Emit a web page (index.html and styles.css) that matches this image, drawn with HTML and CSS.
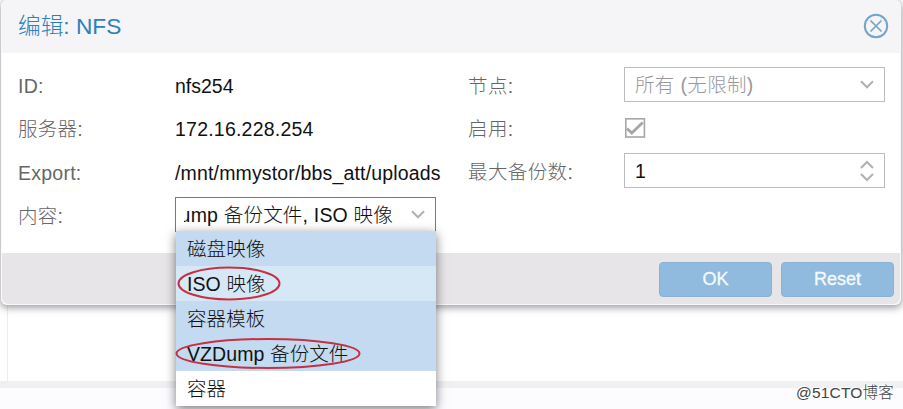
FILE: index.html
```
<!DOCTYPE html>
<html lang="zh-CN">
<head>
<meta charset="utf-8">
<title>编辑: NFS</title>
<link rel="stylesheet" href="styles.css">
</head>
<body>
<div class="page">
  <section class="dialog">
    <header class="titlebar">
      <h1>编辑: NFS</h1>
      <svg class="close" width="26" height="26" viewBox="0 0 26 26"><circle cx="13" cy="13" r="11.2"/><path d="M7.5 7.5l11 11M18.5 7.5l-11 11"/></svg>
    </header>
    <div class="form">
      <div class="column">
        <div class="row"><label>ID:</label><span class="value">nfs254</span></div>
        <div class="row"><label>服务器:</label><span class="value address">172.16.228.254</span></div>
        <div class="row"><label>Export:</label><span class="value path">/mnt/mmystor/bbs_att/uploads</span></div>
        <div class="row"><label>内容:</label>
          <div class="field combo">
            <div class="clip"><span>VZDump 备份文件, ISO 映像</span></div>
            <svg class="chevron" width="14" height="9" viewBox="0 0 14 9"><path d="M1 1.2l6 6 6-6"/></svg>
            <ul class="menu">
              <li class="selected">磁盘映像</li>
              <li class="hover">ISO 映像</li>
              <li class="selected">容器模板</li>
              <li class="selected">VZDump 备份文件</li>
              <li>容器</li>
              <svg class="marks" width="261" height="175" viewBox="0 0 261 175"><ellipse cx="54" cy="52.5" rx="50.5" ry="16"/><ellipse cx="93" cy="122.5" rx="91.5" ry="14.5"/></svg>
            </ul>
          </div>
        </div>
      </div>
      <div class="column right">
        <div class="row"><label>节点:</label>
          <div class="field disabled"><span>所有 (无限制)</span><svg class="chevron" width="14" height="9" viewBox="0 0 14 9"><path d="M1 1.2l6 6 6-6"/></svg></div>
        </div>
        <div class="row"><label>启用:</label>
          <svg class="check" width="22" height="20" viewBox="0 0 22 20"><rect x="1.8" y=".8" width="18.6" height="18.2"/><path class="tick" d="M3 10.5l4.8 4.5L18.7 4.5"/></svg>
        </div>
        <div class="row"><label>最大备份数:</label>
          <div class="field"><span>1</span><svg class="chevron" width="14" height="22" viewBox="0 0 14 22"><path d="M1 8l6-6 6 6M1 14l6 6 6-6"/></svg></div>
        </div>
      </div>
    </div>
    <footer class="actions"><button>OK</button><button>Reset</button></footer>
  </section>
  <div class="panel"></div>
  <div class="splitter"></div>
  <div class="status"><span>@51CTO博客</span></div>
</div>
</body>
</html>
```
FILE: styles.css
```
* { box-sizing: border-box; }
body {
  margin: 0;
  overflow: hidden;
  background: #fff;
  font: 300 19.5px/35px "Liberation Sans", "Noto Sans CJK SC", sans-serif;
}
.page { display: flex; flex-direction: column; height: 409px; }
.dialog {
  position: relative;
  z-index: 1;
  height: 305px;
  margin: 0 2px 0 1px;
  border: solid #f8f7f9;
  border-width: 0 1px 1px;
  border-radius: 6px;
  background: #fff;
  box-shadow: 0 2px 7px 1px rgba(70, 65, 75, .5);
}
.titlebar {
  display: flex;
  align-items: center;
  justify-content: space-between;
  height: 53px;
  padding: 0 11px 1px 16px;
  border-radius: 6px 6px 0 0;
  background: #f5f4f7;
}
h1 { margin: 0; color: #2f80b9; font-size: 22.7px; font-weight: 300; }
.close { fill: none; stroke: #72a5c9; stroke-width: 2; }
.close path { stroke-width: 1.7; }
.form { display: flex; height: 200px; padding: 14px 16px 0; }
.column { display: grid; grid-auto-rows: 35px; row-gap: 8.4px; align-content: start; width: 449px; flex: none; }
.column.right { width: 420px; row-gap: 8px; }
.row { display: flex; align-items: center; white-space: nowrap; }
label { width: 157px; flex: none; padding-top: 4px; color: #666669; letter-spacing: .25px; }
.right label { width: 156px; letter-spacing: .4px; }
.value { padding-top: 4px; color: #111; }
.address { letter-spacing: .22px; }
.path { letter-spacing: .16px; }
.right .row { margin-left: 1px; }
.field {
  position: relative;
  display: flex;
  flex: none;
  align-items: center;
  justify-content: space-between;
  width: 261px;
  height: 35px;
  padding: 0 10px;
  border: 1px solid #bdbdc0;
  color: #111;
}
.field > span { padding-top: 2px; }
.chevron { flex: none; fill: none; stroke: #b2b2b5; stroke-width: 2.1; }
.disabled { color: #98989b; letter-spacing: .35px; }
.check { fill: none; stroke: #a6a6a9; stroke-width: 1.6; }
.check .tick { stroke-width: 2.8; }
.combo { border-color: #3f8cab; padding-left: 8px; }
.clip { display: flex; justify-content: flex-end; width: 209px; padding-top: 2px; overflow: hidden; letter-spacing: .2px; }
.menu {
  position: absolute;
  top: 33px;
  left: 0;
  width: 260px;
  height: 175px;
  margin: 0;
  padding: 0;
  list-style: none;
  letter-spacing: .1px;
  background: #fff;
  box-shadow: 0 3px 10px rgba(55, 50, 60, .65);
}
.menu li { height: 35px; padding-left: 11px; line-height: 36px; }
.menu .selected { background: #c3daf0; }
.menu .hover { background: #d6e8f6; }
.marks { position: absolute; top: 0; left: -1px; fill: none; stroke: #c43145; stroke-width: 2; }
.actions {
  display: flex;
  justify-content: flex-end;
  gap: 9px;
  height: 51px;
  padding: 9px 6px 0;
  border-radius: 0 0 6px 6px;
  background: #e7e5e8;
}
button {
  width: 113px;
  height: 35px;
  padding: 0 0 0 0;
  border: 1px solid #86b3d6;
  border-radius: 4px;
  background: #91bbde;
  color: #f4faff;
  font: 18px/33px "Liberation Sans", sans-serif;
  -webkit-text-stroke: .3px #f4faff;
}
.panel { height: 76px; margin-left: 7px; border-left: 1px solid #eeecef; }
.splitter { height: 7px; background: #f0eff1; }
.status { display: flex; justify-content: flex-end; height: 21px; padding-right: 9px; background: #fcfbfe; }
.status span { color: #444; font-size: 15.5px; line-height: 9px; letter-spacing: .2px; text-shadow: -1px -1px 0 #fff; }
```
